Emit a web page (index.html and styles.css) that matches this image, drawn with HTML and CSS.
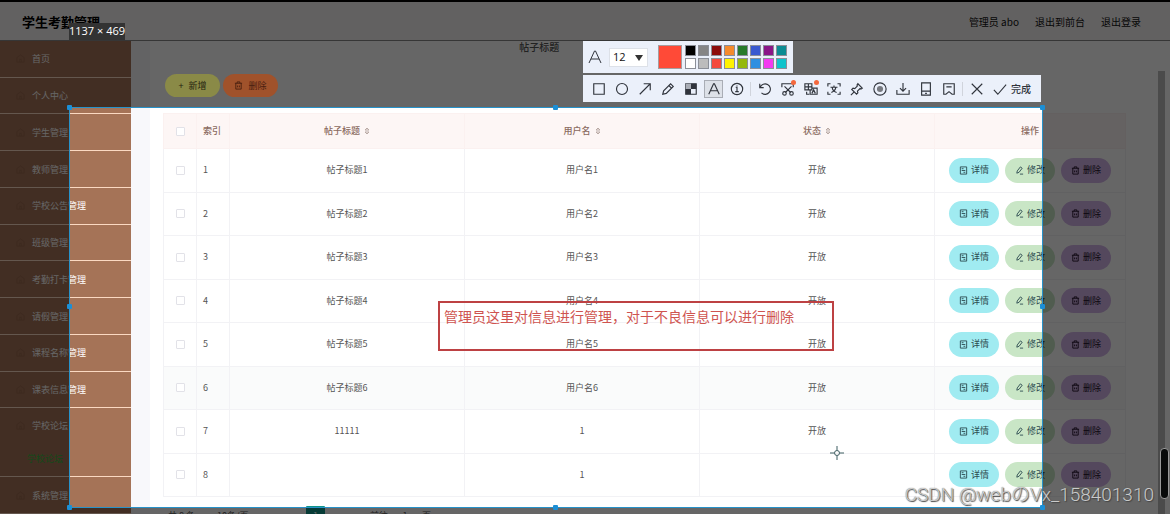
FILE: index.html
```html
<!DOCTYPE html>
<html lang="zh-CN">
<head>
<meta charset="utf-8">
<title>学生考勤管理</title>
<link rel="stylesheet" href="styles.css">
</head>
<body>
<svg class="defs" aria-hidden="true">
  <symbol id="i-doc" viewBox="0 0 10 10"><path d="M1.500 1h7v8h-7zM3 3h2M3 5h4M5 7h2"/></symbol>
  <symbol id="i-edit" viewBox="0 0 10 10"><path d="M2 8l.5-2.500L6 1l2 1.500-3.500 4.500L2 8zM5.500 9H9"/></symbol>
  <symbol id="i-trash" viewBox="0 0 10 10"><path d="M1 2.500h8M3.500 2.500V1h3v1.500M2 2.500V9h6V2.500M4 5v2M6 5v2"/></symbol>
  <symbol id="i-sort" viewBox="0 0 6 8"><path d="M1 3l2-2 2 2zM1 5l2 2 2-2z"/></symbol>
  <symbol id="i-menu" viewBox="0 0 10 10"><path d="M1 4l4-3 4 3v5H1zM4 9V6h2v3"/></symbol>
</svg>
<div class="app">
  <header class="topbar">
    <h1 class="brand">学生考勤管理</h1>
    <nav class="account"><span>管理员 abo</span><a href="#front">退出到前台</a><a href="#logout">退出登录</a></nav>
  </header>
  <div class="body">
    <nav class="side">
      <a class="item" href="#"><svg class="ico"><use href="#i-menu"/></svg>首页</a>
      <a class="item" href="#"><svg class="ico"><use href="#i-menu"/></svg>个人中心</a>
      <a class="item" href="#"><svg class="ico"><use href="#i-menu"/></svg>学生管理</a>
      <a class="item" href="#"><svg class="ico"><use href="#i-menu"/></svg>教师管理</a>
      <a class="item" href="#"><svg class="ico"><use href="#i-menu"/></svg>学校公告管理</a>
      <a class="item" href="#"><svg class="ico"><use href="#i-menu"/></svg>班级管理</a>
      <a class="item" href="#"><svg class="ico"><use href="#i-menu"/></svg>考勤打卡管理</a>
      <a class="item" href="#"><svg class="ico"><use href="#i-menu"/></svg>请假管理</a>
      <a class="item" href="#"><svg class="ico"><use href="#i-menu"/></svg>课程名称管理</a>
      <a class="item" href="#"><svg class="ico"><use href="#i-menu"/></svg>课表信息管理</a>
      <div class="group">
        <a class="item open" href="#"><svg class="ico"><use href="#i-menu"/></svg>学校论坛</a>
        <a class="sub" href="#">学校论坛</a>
      </div>
      <a class="item" href="#"><svg class="ico"><use href="#i-menu"/></svg>系统管理</a>
    </nav>
    <main class="main">
      <h2 class="crumb">帖子标题</h2>
      <div class="bulk">
        <button class="pill add"><span>+</span>新增</button>
        <button class="pill remove"><svg class="ico"><use href="#i-trash"/></svg>删除</button>
      </div>
      <table class="grid">
        <colgroup><col class="c-s"><col class="c-s"><col><col><col><col class="c-act"></colgroup>
        <thead><tr>
          <th><input type="checkbox" aria-label="全选"></th><th class="idx">索引</th>
          <th>帖子标题<svg class="sort"><use href="#i-sort"/></svg></th>
          <th>用户名<svg class="sort"><use href="#i-sort"/></svg></th>
          <th>状态<svg class="sort"><use href="#i-sort"/></svg></th>
          <th>操作</th>
        </tr></thead>
        <tbody id="rows"></tbody>
      </table>
      <div class="pager">
        <span class="total">共 8 条</span><span class="size">10条/页</span><button class="page">1</button><span>前往</span><span class="num">1</span><span>页</span>
      </div>
    </main>
    <div class="track"></div>
  </div>
</div>

<div class="selection">
  <span class="size-tag">1137 × 469</span>
  <i class="h t l"></i><i class="h t c"></i><i class="h t r"></i>
  <i class="h m l"></i><i class="h m r"></i>
  <i class="h b l"></i><i class="h b c"></i><i class="h b r"></i>
</div>
<div class="note">管理员这里对信息进行管理，对于不良信息可以进行删除</div>
<svg class="cursor" viewBox="0 0 14 14"><path d="M7 0v4M7 10v4M0 7h4M10 7h4"/><circle cx="7" cy="7" r="2.500"/></svg>

<div class="tools">
  <div class="bar style-bar">
    <svg class="letter" viewBox="0 0 16 16"><path d="M2 14L7.500 2h1L14 14M4 10h8"/></svg>
    <label class="font-size"><select aria-label="字号"><option>12</option></select><svg viewBox="0 0 8 6"><path d="M0 0h8L4 6z"/></svg></label>
    <button class="current" aria-label="当前颜色"></button>
    <div class="swatches" id="swatches"></div>
  </div>
  <div class="bar">
    <button class="tool" aria-label="矩形"><svg viewBox="0 0 16 16"><path d="M2 2h12v12H2z"/></svg></button>
    <button class="tool" aria-label="椭圆"><svg viewBox="0 0 16 16"><circle cx="8" cy="8" r="6.300"/></svg></button>
    <button class="tool" aria-label="箭头"><svg viewBox="0 0 16 16"><path d="M2 14L14 2M6.500 2H14v7.500"/></svg></button>
    <button class="tool" aria-label="画笔"><svg viewBox="0 0 16 16"><path d="M2 14l1-4 8-8 3 3-8 8zM9 4l3 3"/></svg></button>
    <button class="tool" aria-label="马赛克"><svg viewBox="0 0 16 16"><path d="M2 2h12v12H2z"/><path class="mosaic" d="M2 2h6v6H2z"/><path class="fill" d="M8 2h6v6H8zM2 8h6v6H2z"/></svg></button>
    <button class="tool active" aria-label="文字"><svg viewBox="0 0 16 16"><path d="M2 14L7.500 2h1L14 14M4 10h8"/></svg></button>
    <button class="tool" aria-label="序号"><svg viewBox="0 0 16 16"><circle cx="8" cy="8" r="6.500"/><path d="M6.500 6H8v5M6 11h4M8 4v.8"/></svg></button>
    <span class="sep"></span>
    <button class="tool" aria-label="撤销"><svg viewBox="0 0 16 16"><path d="M2 2v4.500h4.500M2.500 6A6 6 0 1 1 4 12.500"/></svg></button>
    <button class="tool dot" aria-label="裁剪"><svg viewBox="0 0 16 16"><path d="M1 6V2h13v4M4 5l7 7M12 5l-7 7"/><circle cx="4" cy="13" r="2"/><circle cx="12" cy="13" r="2"/></svg></button>
    <button class="tool dot" aria-label="翻译"><svg viewBox="0 0 16 16"><path d="M1 2h8v7H1zM1 5.500h8M5 2v7M9 7h6v7H7V9M9 13l2-4 2 4M3 11v3h3"/></svg></button>
    <button class="tool" aria-label="识别文字"><svg viewBox="0 0 16 16"><path d="M1 5V2h3M12 2h3v3M15 11v3h-3M4 14H1v-3M4 6h8M8 4v2M5 12c4-2 5-4 5-6M11 12C8 11 6 9 6 6"/></svg></button>
    <button class="tool" aria-label="钉住"><svg viewBox="0 0 16 16"><path d="M9 2l5 5-1.500 1-1-.5-3 3 .5 2L7.500 14 2 8.500 3.500 7l2 .5 3-3-.5-1zM4.500 11.500L1 15"/></svg></button>
    <button class="tool" aria-label="录制"><svg viewBox="0 0 16 16"><circle cx="8" cy="8" r="7"/><circle class="grey" cx="8" cy="8" r="3.500"/></svg></button>
    <button class="tool" aria-label="保存"><svg viewBox="0 0 16 16"><path d="M8 1v9M4.500 7L8 10.500 11.500 7M1 9v5h14V9"/></svg></button>
    <button class="tool" aria-label="发送到手机"><svg viewBox="0 0 16 16"><path d="M3 1h10v14H3zM3 10.500h10M7 13h2"/></svg></button>
    <button class="tool" aria-label="收藏"><svg viewBox="0 0 16 16"><path d="M2 2h12v12h-2.500L8 11l-3.500 3H2zM5 5.500h6"/></svg></button>
    <span class="sep"></span>
    <button class="tool" aria-label="取消"><svg viewBox="0 0 16 16"><path d="M2 2l12 12M14 2L2 14"/></svg></button>
    <button class="done"><svg viewBox="0 0 16 16"><path d="M1 9l4.500 5L15 3"/></svg>完成</button>
  </div>
</div>
<div class="thumb"></div>
<div class="watermark">CSDN @webのVx_158401310</div>
<script src="app.js"></script>
</body>
</html>
```
FILE: styles.css
```css
* { box-sizing: border-box; }
body { margin: 0; height: 100vh; overflow: hidden; position: relative; background: #fff; font-family: "Noto Sans CJK SC", sans-serif; font-size: 9px; color: #555; }
button, select { font: inherit; color: inherit; margin: 0; padding: 0; border: 0; cursor: pointer; }
a { color: inherit; text-decoration: none; }
svg { fill: none; stroke: currentColor; }
.defs { position: absolute; width: 0; height: 0; }
.app { height: 100vh; display: flex; flex-direction: column; overflow: hidden; }

.topbar { flex: none; height: 41px; display: flex; align-items: center; justify-content: space-between; padding: 0 29px 0 22px; border-top: 2px solid #000; border-bottom: 1px solid #888; background: #f6f3f2; }
.brand { margin: 0; font-size: 13px; font-weight: 700; color: #000; }
.account { display: flex; gap: 16px; font-size: 10px; color: #111; }

.body { flex: 1; min-height: 0; display: flex; background: #fff; }
.side { flex: none; width: 131px; display: flex; flex-direction: column; background: #a57357; color: #fff; }
.item { flex: 1; display: flex; align-items: center; gap: 7px; padding-left: 16px; border-bottom: 1px solid #fbd9c2; }
.item .ico { color: #98694f; }
.group { height: 69px; flex: none; display: flex; flex-direction: column; border-bottom: 1px solid #fbd9c2; }
.group .open { border-bottom: 0; }
.sub { height: 33px; padding: 9px 0 0 27px; color: #2fb840; }
.ico { width: 9px; height: 9px; flex: none; }

.main { flex: 1; min-width: 0; padding: 0 32px; box-shadow: inset 19px 0 #f8f8fb; }
.crumb { margin: 0; padding-left: 37%; font-size: 10px; line-height: 12px; font-weight: 500; color: #555; }
.bulk { display: flex; gap: 3px; margin: 21px 0 16px; padding-left: 2px; }
.pill { display: flex; align-items: center; justify-content: center; gap: 3px; border-radius: 13px; }
.bulk .pill { position: relative; z-index: 3; height: 23px; width: 55px; gap: 5px; color: #26240f; }
.bulk .add { background: #8a8a47; }
.bulk .remove { background: #a0522b; color: #4a2010; }

.grid { width: 100%; height: 384px; table-layout: fixed; border-collapse: collapse; text-align: center; line-height: 12px; }
.grid th, .grid td { padding: 0; border: 1px solid #f2f2f5; }
.grid th { height: 35px; font-weight: 500; color: #8a6a60; background: #fdf6f5; border-color: #fbf1f0; }
.c-s { width: 33px; }
.c-act { width: 191px; }
.grid .idx { text-align: left; padding-left: 6px; white-space: nowrap; }
.grid tr.hover td { background: #fafbfb; }
.grid input { appearance: none; display: block; width: 9px; height: 9px; margin: 0 auto; border: 1px solid #e2e2e8; border-radius: 1px; background: #fff; }
.sort { width: 6px; height: 8px; margin-left: 4px; vertical-align: -1px; color: #b9a9a4; }
.acts { display: flex; justify-content: center; gap: 6px; color: #2d4b50; }
.acts .pill { width: 50px; height: 25px; }
.view { background: #a0ebf1; }
.modify { background: #c9e6c6; }
.del { background: #d3b4e8; color: #201028; }

.pager { display: flex; align-items: center; height: 19px; margin-top: 9px; padding-left: 5px; }
.pager .total { width: 49px; }
.pager .size { width: 89px; }
.pager .page { width: 19px; height: 19px; margin-right: 45px; background: #0f9488; color: #fff; border-radius: 1px; }
.pager .num { width: 34px; text-align: center; }
.track { flex: none; width: 12px; margin-top: 30px; border-right: 5px solid #fff; background: #bbb; }

.selection { position: absolute; z-index: 2; left: 69px; right: 127px; top: 107px; bottom: 6px; border: 1px solid #2792c9; box-shadow: 0 0 0 2000px rgba(0, 0, 0, .6); }
.size-tag { position: absolute; left: -1px; bottom: 100%; margin-bottom: 68px; height: 17px; background: #333; color: #fff; font: 11px/16px "Open Sans", sans-serif; white-space: nowrap; }
.h { position: absolute; width: 5px; height: 5px; border-radius: 1px; background: #1c8fd6; }
.t { top: -3px; } .m { top: 49%; } .b { bottom: -3px; }
.l { left: -3px; } .c { left: calc(50% - 3px); } .r { right: -3px; }

.note { position: absolute; z-index: 3; left: 438px; top: 301px; width: 396px; height: 50px; padding: 4px; border: 2px solid #bd4143; color: #cf5450; font-size: 14px; line-height: 18px; white-space: nowrap; }
.cursor { position: absolute; z-index: 3; left: 830px; top: 446px; width: 14px; height: 14px; color: #3d5c60; }

.tools { position: absolute; z-index: 4; left: 583px; top: 41px; display: flex; flex-direction: column; align-items: flex-start; gap: 2px; color: #30343c; }
.bar { height: 27px; display: flex; align-items: center; padding: 0 0 0 4px; background: #ebf0fa; }
.style-bar { height: 32px; padding: 0 6px 0 4px; }
.letter { width: 16px; height: 16px; }
.font-size { position: relative; margin: 0 10px 0 6px; }
.font-size select { appearance: none; display: block; width: 39px; height: 19px; padding-left: 3px; border: 1px solid #dde1e8; background: #fff; font: 11px/16px "Open Sans", sans-serif; color: #111; }
.font-size svg { position: absolute; right: 5px; top: 7px; width: 8px; height: 6px; fill: #333; stroke: none; pointer-events: none; }
.current { width: 24px; height: 24px; margin-right: 3px; border: 1px solid #a59da0; background: #ff4a37; }
.swatches { display: grid; grid-template-columns: repeat(8, 11px); gap: 2px; }
.swatches button { height: 11px; border: 1px solid #8b8f98; }
.tool { position: relative; width: 23px; height: 21px; display: grid; place-items: center; background: none; }
.tool svg, .done svg { width: 14px; height: 14px; stroke-width: 1.3; }
.tool.active { background: #dde1e8; box-shadow: inset 0 0 0 1px #a9adb5; width: 19px; height: 18px; margin: 0 2px; }
.tool.dot::after { content: ""; position: absolute; right: 3px; top: 2px; width: 5px; height: 5px; border-radius: 50%; background: #f4683d; }
.fill { fill: currentColor; stroke: none; }
.mosaic { fill: #a9adb5; stroke: none; }
.grey { fill: #777a80; stroke: none; }
.sep { width: 1px; height: 14px; margin: 0 2px; background: #d0d4dc; }
.done { width: 53px; display: flex; align-items: center; gap: 4px; padding-left: 5px; background: none; font-size: 10px; font-weight: 500; line-height: 16px; white-space: nowrap; }

.thumb { position: absolute; z-index: 4; right: 1px; bottom: 15px; width: 9px; height: 51px; border: 1px solid #999; border-radius: 4px; background: #080a0a; }
.watermark { position: absolute; z-index: 5; right: 16px; bottom: 7px; font: 300 19px/24px Roboto, "Noto Sans CJK SC", sans-serif; color: rgba(225, 225, 225, .85); text-shadow: 1px 1px 1px #444, 0 0 1px #555; white-space: nowrap; }
```
FILE: app.js
```js
const posts = [
  ["帖子标题1", "用户名1", "开放"], ["帖子标题2", "用户名2", "开放"],
  ["帖子标题3", "用户名3", "开放"], ["帖子标题4", "用户名4", "开放"],
  ["帖子标题5", "用户名5", "开放"], ["帖子标题6", "用户名6", "开放"],
  ["11111", "1", "开放"], ["", "1", ""]
];
const action = (cls, icon, text) =>
  `<button class="pill ${cls}"><svg class="ico"><use href="#${icon}"/></svg>${text}</button>`;
document.getElementById("rows").innerHTML = posts.map((p, i) => `
  <tr class="${i === 5 ? "hover" : ""}">
    <td><input type="checkbox" aria-label="选择第${i + 1}行"></td><td class="idx">${i + 1}</td>
    ${p.map(v => `<td>${v}</td>`).join("")}
    <td><div class="acts">${action("view", "i-doc", "详情")}${action("modify", "i-edit", "修改")}${action("del", "i-trash", "删除")}</div></td>
  </tr>`).join("");

const colors = ["#000000", "#858585", "#8b0c0c", "#f58b2d", "#277a2b", "#3959d0", "#8a1687", "#0b8b93",
  "#ffffff", "#bcbcbc", "#f44a3e", "#fff200", "#94b80c", "#2f8fe0", "#f33af0", "#0fc3cc"];
document.getElementById("swatches").innerHTML = colors.map(c =>
  `<button style="background:${c}" aria-label="${c}"></button>`).join("");
```
